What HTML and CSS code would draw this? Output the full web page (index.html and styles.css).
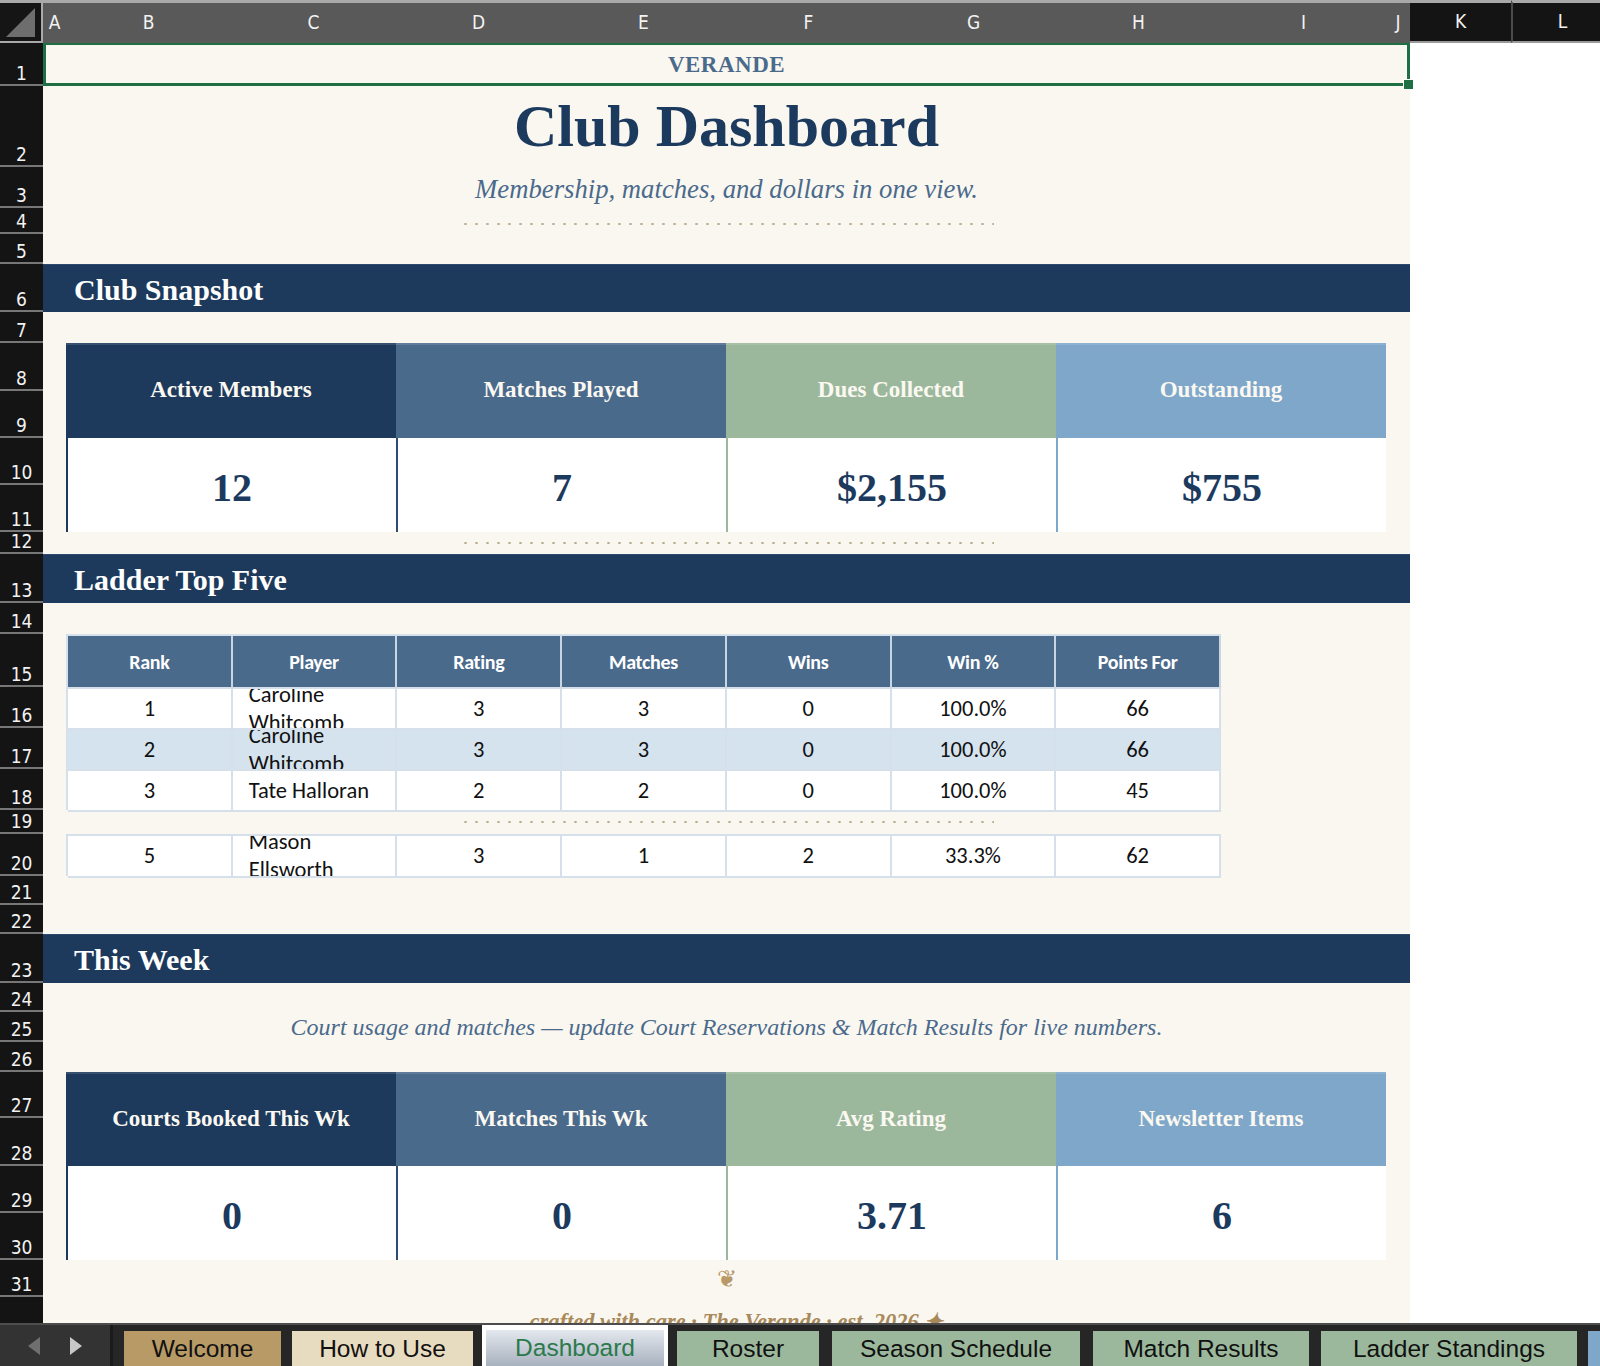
FILE: index.html
```html
<!DOCTYPE html>
<html lang="en">
<head>
    <meta charset="UTF-8">
    <meta name="viewport" content="width=device-width, initial-scale=1.0">
    <title>Club Dashboard</title>
    <link rel="stylesheet" href="styles.css">
</head>
<body>
    <div class="sheet">
        <!-- column headers -->
        <div class="corner">
            <svg width="43" height="43" viewBox="0 0 43 43"><path d="M8 37 L37 37 L37 8 Z" fill="#6e6e6e"/></svg>
        </div>
        <div class="ch">A</div>
        <div class="ch">B</div>
        <div class="ch">C</div>
        <div class="ch">D</div>
        <div class="ch">E</div>
        <div class="ch">F</div>
        <div class="ch">G</div>
        <div class="ch">H</div>
        <div class="ch">I</div>
        <div class="ch">J</div>
        <div class="ch dark">K</div>
        <div class="ch dark edge">L</div>

        <!-- row headers -->
        <div class="rh">1</div>
        <div class="rh">2</div>
        <div class="rh">3</div>
        <div class="rh">4</div>
        <div class="rh">5</div>
        <div class="rh">6</div>
        <div class="rh">7</div>
        <div class="rh">8</div>
        <div class="rh">9</div>
        <div class="rh">10</div>
        <div class="rh">11</div>
        <div class="rh">12</div>
        <div class="rh">13</div>
        <div class="rh">14</div>
        <div class="rh">15</div>
        <div class="rh">16</div>
        <div class="rh">17</div>
        <div class="rh">18</div>
        <div class="rh">19</div>
        <div class="rh">20</div>
        <div class="rh">21</div>
        <div class="rh">22</div>
        <div class="rh">23</div>
        <div class="rh">24</div>
        <div class="rh">25</div>
        <div class="rh">26</div>
        <div class="rh">27</div>
        <div class="rh">28</div>
        <div class="rh">29</div>
        <div class="rh">30</div>
        <div class="rh">31</div>
        <div class="rh"></div>

        <div class="paper"></div>

        <div class="brand">VERANDE</div>
        <h1 class="title">Club Dashboard</h1>
        <p class="subtitle">Membership, matches, and dollars in one view.</p>
        <div class="dots r4"><span></span></div>

        <div class="band r6">Club Snapshot</div>

        <div class="kpis r8">
            <div class="kpi navy">
                <div class="kpi-label">Active Members</div>
                <div class="kpi-value">12</div>
            </div>
            <div class="kpi steel">
                <div class="kpi-label">Matches Played</div>
                <div class="kpi-value">7</div>
            </div>
            <div class="kpi sage">
                <div class="kpi-label">Dues Collected</div>
                <div class="kpi-value">$2,155</div>
            </div>
            <div class="kpi sky">
                <div class="kpi-label">Outstanding</div>
                <div class="kpi-value">$755</div>
            </div>
        </div>

        <div class="dots r12"><span></span></div>

        <div class="band r13">Ladder Top Five</div>

        <div class="ladder r15">
            <div class="tr">
                <div class="th">Rank</div>
                <div class="th">Player</div>
                <div class="th">Rating</div>
                <div class="th">Matches</div>
                <div class="th">Wins</div>
                <div class="th">Win %</div>
                <div class="th">Points For</div>
            </div>
            <div class="tr">
                <div class="td">1</div>
                <div class="td name"><span>Caroline Whitcomb</span></div>
                <div class="td">3</div>
                <div class="td">3</div>
                <div class="td">0</div>
                <div class="td">100.0%</div>
                <div class="td">66</div>
            </div>
            <div class="tr alt">
                <div class="td">2</div>
                <div class="td name"><span>Caroline Whitcomb</span></div>
                <div class="td">3</div>
                <div class="td">3</div>
                <div class="td">0</div>
                <div class="td">100.0%</div>
                <div class="td">66</div>
            </div>
            <div class="tr">
                <div class="td">3</div>
                <div class="td name"><span>Tate Halloran</span></div>
                <div class="td">2</div>
                <div class="td">2</div>
                <div class="td">0</div>
                <div class="td">100.0%</div>
                <div class="td">45</div>
            </div>
        </div>

        <div class="dots r19"><span></span></div>

        <div class="ladder r20">
            <div class="tr">
                <div class="td">5</div>
                <div class="td name"><span>Mason Ellsworth</span></div>
                <div class="td">3</div>
                <div class="td">1</div>
                <div class="td">2</div>
                <div class="td">33.3%</div>
                <div class="td">62</div>
            </div>
        </div>

        <div class="band r23">This Week</div>

        <p class="note">Court usage and matches — update Court Reservations &amp; Match Results for live numbers.</p>

        <div class="kpis r27">
            <div class="kpi navy">
                <div class="kpi-label">Courts Booked This Wk</div>
                <div class="kpi-value">0</div>
            </div>
            <div class="kpi steel">
                <div class="kpi-label">Matches This Wk</div>
                <div class="kpi-value">0</div>
            </div>
            <div class="kpi sage">
                <div class="kpi-label">Avg Rating</div>
                <div class="kpi-value">3.71</div>
            </div>
            <div class="kpi sky">
                <div class="kpi-label">Newsletter Items</div>
                <div class="kpi-value">6</div>
            </div>
        </div>

        <div class="fleuron">❦</div>
        <div class="footer">crafted with care · The Verande · est. 2026 ✦</div>
    </div>

    <div class="tabs">
        <div class="tab-nav">
            <svg width="14" height="20" viewBox="0 0 14 20"><path d="M13 1 L1 10 L13 19 Z" fill="#6f6f6f"/></svg>
            <svg width="14" height="20" viewBox="0 0 14 20"><path d="M1 1 L13 10 L1 19 Z" fill="#c8c8c8"/></svg>
        </div>
        <div class="tab tan w-welcome">Welcome</div>
        <div class="tab beige w-howto">How to Use</div>
        <div class="tab active w-dash"><span>Dashboard</span></div>
        <div class="tab sage w-roster">Roster</div>
        <div class="tab sage w-season">Season Schedule</div>
        <div class="tab sage w-results">Match Results</div>
        <div class="tab sage w-ladder">Ladder Standings</div>
        <div class="tab sky">Court Reservations</div>
    </div>
</body>
</html>
```

FILE: styles.css
```css
body {
    margin: 0;
    background: #ffffff;
    font-family: "Liberation Sans", Arial, sans-serif;
    overflow: hidden;
}

/* ---------- sheet grid ---------- */
.sheet {
    display: grid;
    grid-template-columns: 43px 23px repeat(8, 165px) 24px 101px 101px;
    grid-template-rows:
        43px
        43px 81px 41px 26px 30px 48px 31px 48px 47px 47px
        47px 22px 49px 31px 53px 41px 41px 41px 24px 42px
        29px 29px 49px 29px 30px 30px 46px 48px 47px 47px
        37px 52px;
    height: 1323px;
    overflow: hidden;
}

.corner {
    grid-row: 1;
    grid-column: 1;
    background: #151515;
    border-top: 3px solid #a9a9a9;
    border-right: 2px solid #a9a9a9;
    border-bottom: 2px solid #a9a9a9;
    box-sizing: border-box;
    overflow: hidden;
}
.corner svg {
    display: block;
    margin: -3px 0 0 -2px;
}

.ch {
    grid-row: 1;
    background: #595959;
    border-top: 3px solid #a9a9a9;
    color: #f2f2f2;
    font-family: "DejaVu Sans Condensed", "Liberation Sans Narrow", "Roboto Condensed", "DejaVu Sans", sans-serif;
    font-stretch: condensed;
    font-size: 19px;
    display: flex;
    align-items: center;
    justify-content: center;
    box-sizing: border-box;
    padding-bottom: 2px;
}
.ch.dark {
    background: #141414;
    border-bottom: 2px solid #9a9a9a;
}
.ch.edge {
    border-left: 2px solid #4a4a4a;
}

.rh {
    grid-column: 1;
    background: #141414;
    color: #f2f2f2;
    border-bottom: 2px solid #777777;
    font-family: "DejaVu Sans Condensed", "Liberation Sans Narrow", "Roboto Condensed", "DejaVu Sans", sans-serif;
    font-stretch: condensed;
    font-size: 19px;
    line-height: 19px;
    display: flex;
    align-items: flex-end;
    justify-content: center;
    padding-bottom: 1px;
    box-sizing: border-box;
    overflow: hidden;
}

.paper {
    grid-column: 2 / 12;
    grid-row: 2 / -1;
    background: #faf7f0;
}

/* ---------- title area ---------- */
.brand {
    grid-column: 2 / 12;
    grid-row: 2;
    position: relative;
    border: 3px solid #1f6f45;
    border-top-width: 2px;
    display: flex;
    align-items: center;
    justify-content: center;
    padding-top: 2px;
    font-family: "Liberation Serif", "Times New Roman", serif;
    font-weight: bold;
    font-size: 23px;
    letter-spacing: 0.5px;
    color: #4a6a8c;
}
.brand::after {
    content: "";
    position: absolute;
    right: -7px;
    bottom: -7px;
    width: 9px;
    height: 9px;
    background: #1f6f45;
    border: 1px solid #ffffff;
}

.title {
    grid-column: 2 / 12;
    grid-row: 3;
    margin: 0;
    display: flex;
    align-items: center;
    justify-content: center;
    font-family: "Liberation Serif", "Times New Roman", serif;
    font-weight: bold;
    font-size: 60px;
    color: #1c3a5e;
}

.subtitle {
    grid-column: 2 / 12;
    grid-row: 4;
    margin: 0;
    display: flex;
    align-items: center;
    justify-content: center;
    padding-top: 4px;
    font-family: "Liberation Serif", "Times New Roman", serif;
    font-style: italic;
    font-size: 26.7px;
    color: #4a6a8c;
}

.dots {
    grid-column: 2 / 12;
    display: flex;
    align-items: center;
    justify-content: center;
}
.dots span {
    width: 534px;
    height: 4px;
    background-image: radial-gradient(circle, #bcae90 1px, transparent 1.4px);
    background-size: 11px 4px;
    background-repeat: repeat-x;
}
.r4 { grid-row: 5; padding-top: 5px; }
.r12 { grid-row: 13; }
.r19 { grid-row: 20; }

/* ---------- section bands ---------- */
.band {
    grid-column: 2 / 12;
    background: #1d3a5c;
    border-top: 1px solid #2c4a6e;
    color: #ffffff;
    font-family: "Liberation Serif", "Times New Roman", serif;
    font-weight: bold;
    font-size: 30px;
    display: flex;
    align-items: center;
    padding: 2px 0 0 31px;
}
.r6 { grid-row: 7; }
.r13 { grid-row: 14; }
.r23 { grid-row: 24; }

/* ---------- kpi cards ---------- */
.kpis {
    grid-column: 3 / 11;
    display: grid;
    grid-template-columns: repeat(4, 1fr);
}
.r8 { grid-row: 9 / 13; }
.r27 { grid-row: 28 / 32; }

.kpi {
    display: grid;
    grid-template-rows: 1fr 1fr;
}
.kpi-label {
    display: flex;
    align-items: center;
    justify-content: center;
    color: #fbf8f1;
    font-family: "Liberation Serif", "Times New Roman", serif;
    font-weight: bold;
    font-size: 23px;
    box-shadow: inset 0 2px 0 rgba(255, 255, 255, 0.12);
}
.kpi-value {
    display: flex;
    align-items: center;
    justify-content: center;
    background: #ffffff;
    color: #1c3a5e;
    font-family: "Liberation Serif", "Times New Roman", serif;
    font-weight: bold;
    font-size: 40px;
    padding-top: 5px;
    border-left: 2px solid;
}
.navy .kpi-label { background: #1d3a5c; }
.navy .kpi-value { border-color: #1d3a5c; }
.steel .kpi-label { background: #4a6a8c; }
.steel .kpi-value { border-color: #2e4c6f; }
.sage .kpi-label { background: #9bb89d; }
.sage .kpi-value { border-color: #9bb89d; }
.sky .kpi-label { background: #7ea7ca; }
.sky .kpi-value { border-color: #7ea7ca; }

/* ---------- ladder table ---------- */
.ladder {
    grid-column: 3 / 10;
    display: grid;
    grid-template-columns: repeat(7, 1fr);
    border-top: 2px solid #d6e0ea;
    border-left: 2px solid #d6e0ea;
    font-family: "Carlito", "Lato", "Liberation Sans", sans-serif;
}
.r15 {
    grid-row: 16 / 20;
    grid-template-rows: 53px 41px 41px 41px;
}
.r20 {
    grid-row: 21;
    grid-template-rows: 42px;
}
.tr {
    display: contents;
}
.th, .td {
    display: flex;
    align-items: center;
    justify-content: center;
    overflow: hidden;
    border-right: 2px solid #d6e0ea;
    border-bottom: 2px solid #d6e0ea;
    box-sizing: border-box;
}
.th {
    background: #4a6a8c;
    border-right-color: #c8d5e2;
    color: #ffffff;
    font-weight: bold;
    font-size: 20px;
    letter-spacing: -0.3px;
}
.td {
    background: #ffffff;
    color: #111111;
    font-size: 22.5px;
    line-height: 28px;
}
.alt .td {
    background: #d5e3ef;
}
.td.name {
    justify-content: flex-start;
    padding-left: 16px;
}
.td.name span {
    max-width: 128px;
}

/* ---------- this week ---------- */
.note {
    grid-column: 2 / 12;
    grid-row: 26;
    margin: 0;
    display: flex;
    align-items: center;
    justify-content: center;
    font-family: "Liberation Serif", "Times New Roman", serif;
    font-style: italic;
    font-size: 24px;
    color: #4a6a8c;
}

.fleuron {
    grid-column: 2 / 12;
    grid-row: 32;
    display: flex;
    align-items: center;
    justify-content: center;
    font-family: "DejaVu Serif", serif;
    font-size: 24px;
    color: #b8996a;
}

.footer {
    grid-column: 2 / 12;
    grid-row: 33;
    display: flex;
    align-items: flex-start;
    justify-content: center;
    padding: 11px 0 0 20px;
    font-family: "Liberation Serif", "Times New Roman", serif;
    font-style: italic;
    font-weight: bold;
    font-size: 22.5px;
    color: #a8895a;
}

/* ---------- sheet tabs ---------- */
.tabs {
    display: flex;
    align-items: flex-end;
    height: 43px;
    background: #262626;
    border-top: 2px solid #4d4d4d;
    box-sizing: border-box;
    overflow: hidden;
}
.tab-nav {
    flex: none;
    width: 113px;
    height: 100%;
    display: flex;
    align-items: center;
    justify-content: center;
    gap: 28px;
    background: #333333;
    border-right: 3px solid #1b1b1b;
    box-sizing: border-box;
}
.tab {
    flex: none;
    margin-left: 11px;
    height: 35px;
    padding: 0 20px;
    box-sizing: border-box;
    display: flex;
    align-items: center;
    justify-content: center;
    font-size: 24.5px;
    color: #111111;
    white-space: nowrap;
}
.tab.tan { background: #b89a66; }
.tab.beige { background: #e8dcc0; }
.tab.sage { background: #9bb89c; }
.tab.sky { background: #7ea7c9; }
.tab.active {
    height: 41px;
    padding: 5px 4px 0;
    margin-left: 9px;
    background: #ffffff;
    align-items: stretch;
}
.tab.active span {
    display: flex;
    align-items: center;
    justify-content: center;
    flex: 1;
    background: linear-gradient(#e4e8ee, #a7b1be);
    color: #2b7a4b;
}
.w-welcome { width: 157px; }
.w-howto { width: 181px; }
.w-dash { width: 186px; }
.w-roster { width: 142px; margin-left: 9px; }
.w-season { width: 248px; margin-left: 13px; }
.w-results { width: 216px; margin-left: 13px; }
.w-ladder { width: 256px; margin-left: 12px; }
```
